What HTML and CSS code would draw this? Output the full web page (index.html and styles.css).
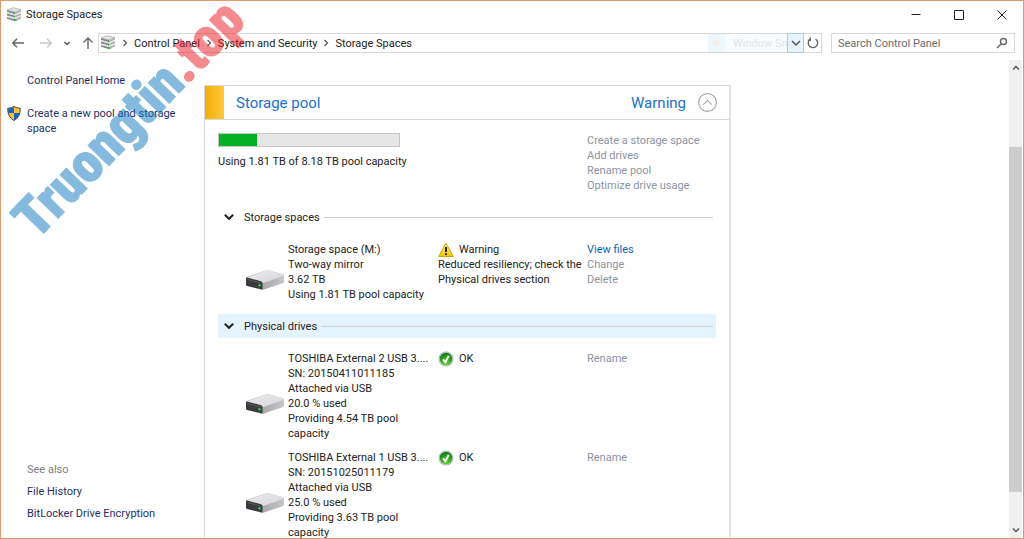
FILE: index.html
```html
<!DOCTYPE html>
<html lang="en">
<head>
<meta charset="utf-8">
<title>Storage Spaces</title>
<link rel="stylesheet" href="styles.css">
</head>
<body>
<svg class="defs" aria-hidden="true">
  <defs>
    <linearGradient id="top" x1="0" y1="0" x2="1" y2="1"><stop offset="0" stop-color="#ececee"/><stop offset="1" stop-color="#d6d6d8"/></linearGradient>
    <linearGradient id="side" x1="0" y1="0" x2="1" y2="0"><stop offset=".4" stop-color="#a6a6aa"/><stop offset="1" stop-color="#c6c6ca"/></linearGradient>
    <linearGradient id="yellow" x1="0" y1="0" x2="0" y2="1"><stop offset="0" stop-color="#fff27a"/><stop offset="1" stop-color="#f2c500"/></linearGradient>
    <radialGradient id="green" cx=".5" cy=".85" r=".8"><stop offset="0" stop-color="#5fd428"/><stop offset="1" stop-color="#0f7d16"/></radialGradient>
    <symbol id="drive" viewBox="0 0 40 22">
      <path d="M1 9.500Q1 8.300 2.500 7.800L20 1.700Q22 1 24 1.500L37 5Q39 5.500 39 7V12.500Q39 13.500 37.500 14.200L19 20.500Q17.500 21 16 20.500L2.500 17Q1 16.500 1 15.500Z" fill="url(#side)"/>
      <path d="M1.500 8.500L21 1.400Q22 1 24 1.500L38 5.300Q39 6 38 6.900L18.500 14Z" fill="url(#top)"/>
      <path d="M1 9Q1 8.300 2.200 8.600L16 12.200Q17.500 12.700 17.500 14V19.500Q17.500 20.700 16 20.300L2.300 17Q1 16.500 1 15.500Z" fill="#3a3b3e"/>
      <path d="M2.500 10.500L15.500 14" stroke="#606266" stroke-width=".8"/>
      <circle cx="14.500" cy="16.300" r="1.200" fill="#27d63b"/>
    </symbol>
    <symbol id="stack" viewBox="0 0 16 16">
      <path d="M1 3L7 .7L15 2.500L9 5Z" fill="#e4e4e4" stroke="#9b9b9b" stroke-width=".6"/>
      <path d="M1 3.200V5L9 7.200V5.200ZM1 6.600V8.400L9 10.600V8.600ZM1 10V11.800L9 14.200V12Z" fill="#85878a"/>
      <path d="M9 5.200V7.200L15 4.800V2.800ZM9 8.600V10.600L15 8.200V6.200ZM9 12V14.200L15 11.600V9.600Z" fill="#b0b2b3"/>
      <path d="M1 6.500L3 5.700L9 7.400L13.500 5.600L15 6L9 8.500ZM1 9.900L3 9.100L9 10.800L13.500 9L15 9.400L9 11.900Z" fill="#dedede"/>
      <path d="M8.500 5.500V7M8.500 9V10.500M8.500 12.300V14M9 12L10.500 14" stroke="#35a542" fill="none"/>
    </symbol>
    <symbol id="ok" viewBox="0 0 16 16">
      <circle cx="8" cy="8" r="7.500" fill="#a8aeb2"/><circle cx="8" cy="8" r="6.700" fill="#d5d9dc"/>
      <circle cx="8" cy="8" r="6.200" fill="url(#green)"/>
      <path d="M5 8.400L7.300 11.200L10.800 4.800" fill="none" stroke="#fff" stroke-width="2"/>
    </symbol>
    <symbol id="down" viewBox="0 0 10 10"><path d="M.8 2.800L5 6.800L9.200 2.800" fill="none" stroke="currentColor" stroke-width="2"/></symbol>
    <symbol id="right" viewBox="0 0 10 10"><path d="M3.500 2L6.500 5L3.500 8" fill="none" stroke="currentColor" stroke-width="1.200"/></symbol>
  </defs>
</svg>
<div class="window">
  <header class="titlebar">
    <svg class="icon16"><use href="#stack"/></svg>
    <h1 class="title">Storage Spaces</h1>
    <div class="controls">
      <button class="control" aria-label="Minimize"><svg class="icon10" viewBox="0 0 10 10"><path d="M.5 4.500H9.500"/></svg></button>
      <button class="control" aria-label="Maximize"><svg class="icon10" viewBox="0 0 10 10"><path d="M.5 .5H9.500V9.500H.5Z"/></svg></button>
      <button class="control" aria-label="Close"><svg class="icon10" viewBox="0 0 10 10"><path d="M.5 .5L9.500 9.500M9.500 .5L.5 9.500"/></svg></button>
    </div>
  </header>

  <nav class="navbar">
    <div class="history">
      <button class="plain" aria-label="Back"><svg class="icon12" viewBox="0 0 12 12"><path d="M12 6H1M5 1.800L.8 6L5 10.200"/></svg></button>
      <button class="plain" aria-label="Forward" disabled><svg class="icon12" viewBox="0 0 12 12"><path d="M0 6H11M7 1.800L11.200 6L7 10.200"/></svg></button>
      <button class="plain small" aria-label="Recent locations"><svg class="icon8" viewBox="0 0 8 8"><path d="M1.500 3L4 5.500L6.500 3"/></svg></button>
      <button class="plain" aria-label="Up"><svg class="icon12" viewBox="0 0 12 12"><path d="M6 12V1M1.500 5.500L6 1L10.500 5.500"/></svg></button>
    </div>
    <div class="address">
      <svg class="icon16"><use href="#stack"/></svg>
      <svg class="sep"><use href="#right"/></svg>
      <a class="crumb" href="#">Control Panel</a>
      <svg class="sep"><use href="#right"/></svg>
      <a class="crumb" href="#">System and Security</a>
      <svg class="sep"><use href="#right"/></svg>
      <a class="crumb" href="#">Storage Spaces</a>
      <div class="ghost"><span class="ghost-mark"></span><span class="ghost-text">Window Snip</span></div>
      <button class="drop" aria-label="Previous locations"><svg class="icon10" viewBox="0 0 10 10"><path class="thin" d="M1 3L5 7L9 3"/></svg></button>
      <button class="refresh" aria-label="Refresh"><svg class="icon12" viewBox="0 0 12 12"><path d="M8.500 2A4.700 4.700 0 1 1 3 2.300M3.300 .3V3.300H.8"/></svg></button>
    </div>
    <label class="search">
      <input class="search-input" type="search" aria-label="Search Control Panel" placeholder="Search Control Panel">
      <svg class="icon12" viewBox="0 0 12 12"><circle cx="7.500" cy="4.500" r="3"/><path d="M5.300 6.800L1 11"/></svg>
    </label>
  </nav>

  <div class="content">
    <aside class="sidebar">
      <a class="side-link" href="#">Control Panel Home</a>
      <a class="side-link shielded" href="#">
        <svg class="shield" viewBox="0 0 14 15">
          <path d="M7 .5Q9.500 2 13.300 2.300Q13.500 11 7 14.500Q.5 11 .7 2.300Q4.500 2 7 .5Z" fill="#fbc231" stroke="#3c4859"/>
          <path d="M7 1.200V7H1.200V2.700Q4.500 2.500 7 1.200ZM7 7H12.700Q12 11.500 7 13.900Z" fill="#1763c4"/>
        </svg>
        <span>Create a new pool and storage space</span>
      </a>
      <div class="see-also">
        <h2 class="see-title">See also</h2>
        <a class="side-link" href="#">File History</a>
        <a class="side-link" href="#">BitLocker Drive Encryption</a>
      </div>
    </aside>

    <main class="main">
      <section class="pool">
        <header class="pool-head">
          <span class="stripe"></span>
          <h2 class="pool-title">Storage pool</h2>
          <span class="pool-state">Warning</span>
          <button class="collapse" aria-label="Collapse pool"><svg class="chevron" viewBox="0 0 18 18"><circle cx="9" cy="9" r="8.400"/><path d="M5 11L9 7L13 11"/></svg></button>
        </header>
        <div class="pool-body">
          <div class="summary">
            <div class="usage">
              <div class="meter" role="img" aria-label="Pool usage"><div class="meter-fill"></div></div>
              <p class="line">Using 1.81 TB of 8.18 TB pool capacity</p>
            </div>
            <div class="actions">
              <a class="off">Create a storage space</a>
              <a class="off">Add drives</a>
              <a class="off">Rename pool</a>
              <a class="off">Optimize drive usage</a>
            </div>
          </div>

          <button class="section-head"><svg class="icon10"><use href="#down"/></svg><span>Storage spaces</span><span class="rule"></span></button>
          <div class="item">
            <svg class="drive"><use href="#drive"/></svg>
            <div class="info">
              <p class="line">Storage space (M:)</p>
              <p class="line">Two-way mirror</p>
              <p class="line">3.62 TB</p>
              <p class="line">Using 1.81 TB pool capacity</p>
            </div>
            <div class="status">
              <p class="line state">
                <svg class="icon16" viewBox="0 0 16 16"><path d="M8 1.200L15.300 14.500H.7Z" fill="url(#yellow)" stroke="#c7a512" stroke-linejoin="round"/><path d="M8 5V10M8 11.300V13" stroke="#222" stroke-width="2"/></svg>Warning</p>
              <p class="line">Reduced resiliency; check the<br>Physical drives section</p>
            </div>
            <div class="actions">
              <a class="on" href="#">View files</a>
              <a class="off">Change</a>
              <a class="off">Delete</a>
            </div>
          </div>

          <button class="section-head lit"><svg class="icon10"><use href="#down"/></svg><span>Physical drives</span><span class="rule"></span></button>
          <div class="item">
            <svg class="drive"><use href="#drive"/></svg>
            <div class="info">
              <p class="line">TOSHIBA External 2 USB 3....</p>
              <p class="line">SN: 20150411011185</p>
              <p class="line">Attached via USB</p>
              <p class="line">20.0 % used</p>
              <p class="line">Providing 4.54 TB pool<br>capacity</p>
            </div>
            <div class="status"><p class="line state"><svg class="icon16"><use href="#ok"/></svg>OK</p></div>
            <div class="actions"><a class="off">Rename</a></div>
          </div>
          <div class="item next">
            <svg class="drive"><use href="#drive"/></svg>
            <div class="info">
              <p class="line">TOSHIBA External 1 USB 3....</p>
              <p class="line">SN: 20151025011179</p>
              <p class="line">Attached via USB</p>
              <p class="line">25.0 % used</p>
              <p class="line">Providing 3.63 TB pool<br>capacity</p>
            </div>
            <div class="status"><p class="line state"><svg class="icon16"><use href="#ok"/></svg>OK</p></div>
            <div class="actions"><a class="off">Rename</a></div>
          </div>
        </div>
      </section>
    </main>

    <div class="scrollbar">
      <button class="scroll-btn" aria-label="Scroll up"><svg class="icon8" viewBox="0 0 8 8"><path d="M1 5.500L4 2.500L7 5.500"/></svg></button>
      <div class="track"><div class="thumb"></div></div>
      <button class="scroll-btn" aria-label="Scroll down"><svg class="icon8" viewBox="0 0 8 8"><path d="M1 2.500L4 5.500L7 2.500"/></svg></button>
    </div>
  </div>
</div>
<div class="watermark">Truongtin<span class="watermark-tld">.top</span></div>
</body>
</html>
```

FILE: styles.css
```css
* { box-sizing: border-box; }
body {
  margin: 0;
  font: 11px/15px Roboto, "Open Sans", sans-serif;
  color: #222;
  background: #fff;
}
h1, h2, p { margin: 0; font-size: inherit; font-weight: normal; }
a { color: inherit; text-decoration: none; }
button { padding: 0; border: 0; background: none; font: inherit; color: inherit; }
svg { display: block; flex: none; }
.defs { position: absolute; width: 0; height: 0; }
.icon16 { width: 16px; height: 16px; }
.icon12 { width: 12px; height: 12px; fill: none; stroke: #666; stroke-width: 1.4px; }
.icon10 { width: 10px; height: 10px; }
.icon8 { width: 8px; height: 8px; fill: none; stroke: #555; stroke-width: 1.5px; }

.window {
  display: flex;
  flex-direction: column;
  height: 100vh;
  border: 1px solid #dd9a6c;
  overflow: hidden;
}
.titlebar { display: flex; align-items: center; gap: 4px; height: 27px; padding-left: 5px; }
.controls { display: flex; margin-left: auto; }
.control { display: flex; align-items: center; justify-content: center; width: 43px; height: 26px; }
.control svg { fill: none; stroke: #222; stroke-width: 1px; }

.navbar { display: flex; align-items: center; height: 30px; padding: 0 8px 0 11px; }
.history { display: flex; align-items: center; gap: 16px; width: 86px; }
.plain:disabled { opacity: .35; }
.small { margin: 0 -5px; }
.address {
  display: flex;
  align-items: center;
  flex: 1;
  height: 20px;
  border: 1px solid #d9d9d9;
  padding-left: 1px;
}
.sep { width: 10px; height: 10px; margin: 0 4px; color: #555; }
.ghost { display: flex; align-items: center; align-self: stretch; margin-left: auto; background: #f8fcff; color: #e0e3e6; }
.ghost-mark { width: 17px; height: 18px; background: radial-gradient(circle, #f7f0ea 3px, #edf7fe 4px); }
.ghost-text { width: 62px; padding-left: 8px; white-space: nowrap; }
.drop, .refresh { display: flex; align-items: center; justify-content: center; width: 17px; height: 18px; }
.drop { border: 1px solid #a5cfe3; background: rgba(222, 240, 252, .7); height: 20px; }
.thin { fill: none; stroke: #555; stroke-width: 1.5px; }
.search { display: flex; align-items: center; width: 184px; height: 20px; margin-left: 9px; padding: 0 6px; border: 1px solid #d9d9d9; }
.search-input { flex: 1; min-width: 0; padding: 0; border: 0; outline: 0; background: none; font: inherit; color: #666; }
.search-input::placeholder { color: #6b6b6b; opacity: 1; }

.content { display: flex; flex: 1; min-height: 0; margin-top: 2px; }
.sidebar { display: flex; flex-direction: column; width: 203px; padding: 13px 22px 17px 26px; color: #1f2f66; }
.shielded { display: flex; gap: 6px; margin: 18px 0 0 -20px; }
.shield { width: 14px; height: 15px; }
.see-also { display: flex; flex-direction: column; gap: 7px; margin-top: auto; white-space: nowrap; }
.see-title { color: #808080; }

.main { flex: 1; min-width: 0; overflow: hidden; padding-top: 25px; }
.pool { max-width: 527px; border: 1px solid #d9d9d9; border-right: 2px solid #e4e4e4; }
.pool-head { display: flex; align-items: center; height: 34px; padding-right: 12px; border-bottom: 1px solid #d9d9d9; color: #1a6fd0; }
.stripe { align-self: stretch; width: 19px; margin-right: 12px; background: linear-gradient(90deg, #f3ae07, #ffc83c); }
.pool-title, .pool-state { font-size: 15px; line-height: 20px; }
.pool-state { margin-left: auto; }
.collapse { margin-left: 12px; }
.chevron { width: 19px; height: 19px; fill: none; stroke: #a3a3a3; stroke-width: 1px; }
.pool-body { padding: 13px 13px 20px; }
.summary { display: flex; justify-content: space-between; height: 72px; }
.usage { width: 185px; white-space: nowrap; }
.meter { width: 182px; height: 14px; margin-bottom: 7px; border: 1px solid #c4c4c4; background: #e6e6e6; }
.meter-fill { width: 21%; height: 100%; background: #06b025; }
.actions { display: flex; flex-direction: column; width: 129px; white-space: nowrap; }
.off { color: #8b93a5; }
.on { color: #0f62bd; }

.section-head { display: flex; align-items: center; gap: 10px; width: 100%; height: 24px; padding: 0 3px 0 6px; color: #222; }
.lit { margin-top: 3px; background: #e5f3fe; }
.rule { flex: 1; height: 1px; margin-left: -6px; background: #d0d3d6; }
.item { display: grid; grid-template-columns: 43px 150px 1fr 129px; padding: 13px 0 9px 27px; }
.next { padding-top: 0; }
.drive { width: 40px; height: 22px; align-self: center; margin-top: 16px; }
.info, .status { white-space: nowrap; }
.state { display: flex; gap: 5px; height: 15px; }

.scrollbar { display: flex; flex-direction: column; width: 13px; margin-right: 1px; background: #f0f0f0; }
.scroll-btn { display: flex; align-items: center; justify-content: center; height: 16px; }
.track { flex: 1; padding-top: 71px; }
.thumb { height: 92%; background: #cdcdcd; }

.watermark {
  position: absolute;
  left: 43px;
  top: 192px;
  transform: rotate(-46deg);
  transform-origin: 0 100%;
  font: 900 55px/55px "Roboto Condensed", Roboto, sans-serif;
  -webkit-text-stroke: 1px currentColor;
  color: #0d78bf;
  opacity: .5;
  pointer-events: none;
}
.watermark-tld { color: #ed1820; }
```
